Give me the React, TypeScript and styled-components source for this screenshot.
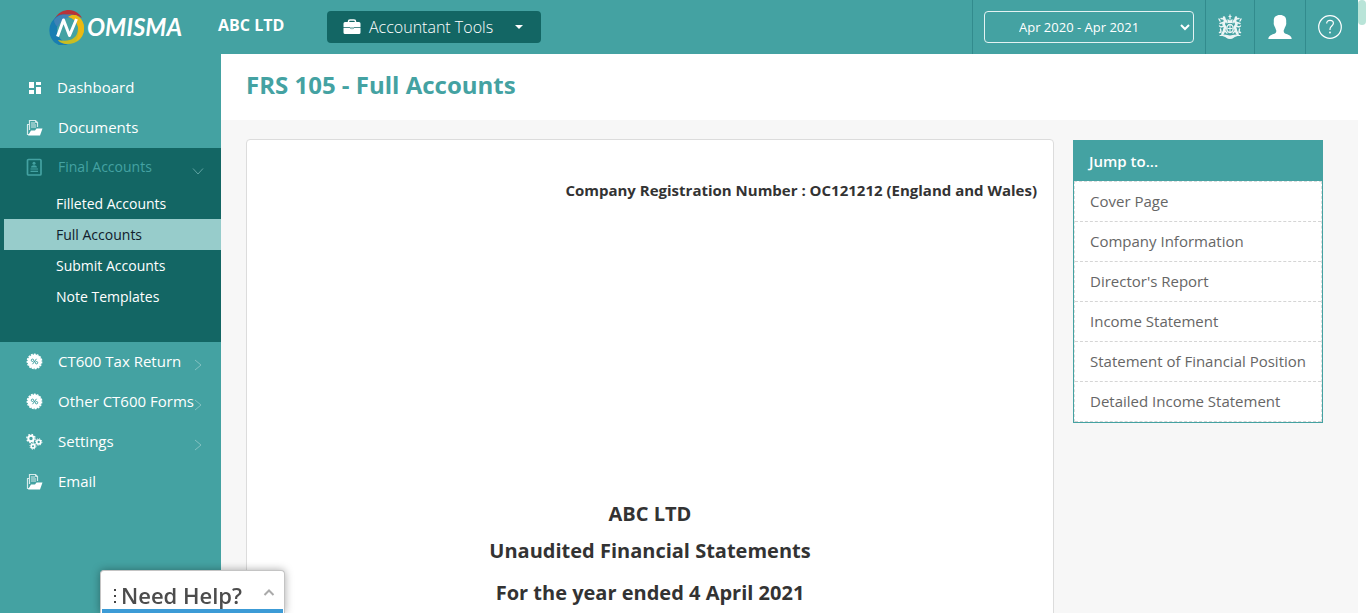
import React from "react";
import styled, { createGlobalStyle, css } from "styled-components";

const teal = "#44a2a2";
const deep = "#136664";

const GlobalStyle = createGlobalStyle`
  *, *::before, *::after { box-sizing: border-box; }
  body { margin: 0; font-family: "Open Sans", "Noto Sans", sans-serif; font-size: 15px; color: #333; background: #fff; }
  button, select { font-family: inherit; }
  a { text-decoration: none; color: inherit; }
  ul { list-style: none; margin: 0; padding: 0; }
  h1, h2, p { margin: 0; }
`;

const Page = styled.div`
  display: grid;
  grid-template-columns: minmax(0, 1fr) 8px;
  height: 100vh;
  overflow: hidden;
`;

const Shell = styled.div`
  display: flex;
  flex-direction: column;
  min-height: 0;
`;

const ScrollRail = styled.div`
  background: #fff;
`;

const ScrollThumb = styled.div`
  height: 25px;
  border-radius: 4px;
  background: #b9e4d8;
`;

const Header = styled.header`
  display: flex;
  align-items: center;
  flex: none;
  height: 54px;
  background: ${teal};
  color: #fff;
`;

const LogoLink = styled.a`
  display: block;
  width: 140px;
  height: 36px;
  margin-left: 49px;
`;

const Company = styled.strong`
  width: 109px;
  margin-left: 29px;
  padding-bottom: 4px;
  font-size: 16px;
  line-height: 22px;
  font-weight: 700;
`;

const ToolsButton = styled.button`
  display: flex;
  align-items: center;
  width: 214px;
  height: 32px;
  padding: 0 16px;
  border: 0;
  border-radius: 4px;
  background: ${deep};
  color: #fff;
  font-size: 16px;
  line-height: 22px;
  font-weight: 300;
  white-space: nowrap;
  span { margin: 0 22px 0 8px; }
`;

const HeaderCells = styled.div`
  display: flex;
  align-self: stretch;
  margin-left: auto;
`;

const Cell = styled.div<{ $width: number }>`
  display: flex;
  align-items: center;
  justify-content: center;
  width: ${(p) => p.$width}px;
  border-left: 1px solid #328b8d;
  &:last-child { padding-right: 4px; }
`;

const IconButton = styled.button`
  display: flex;
  padding: 0;
  border: 0;
  background: transparent;
  color: #fff;
`;

const PeriodSelect = styled.select`
  width: 210px;
  height: 32px;
  padding: 0 0 0 30px;
  border: 1px solid #e4f2f2;
  border-radius: 4px;
  background: ${teal};
  color: #fff;
  font-size: 13px;
`;

const Body = styled.div`
  display: flex;
  flex: 1;
  min-height: 0;
`;

const Sidebar = styled.nav`
  flex: none;
  width: 221px;
  padding-top: 14px;
  background: ${teal};
  color: #fff;
`;

const NavGroup = styled.li<{ $open?: boolean }>`
  ${(p) =>
    p.$open &&
    css`
      padding-bottom: 30px;
      background: ${deep};
    `}
`;

const NavLink = styled.a<{ $muted?: boolean }>`
  display: flex;
  align-items: center;
  height: 40px;
  padding: 0 19px 2px 26px;
  font-size: ${(p) => (p.$muted ? 14 : 15)}px;
  line-height: 20px;
  white-space: nowrap;
  && { color: ${(p) => (p.$muted ? teal : "#fff")}; }
  > svg:first-child { flex: none; margin-right: 15px; }
`;

const ArrowBox = styled.span<{ $down?: boolean }>`
  display: flex;
  margin-left: auto;
  margin-right: ${(p) => (p.$down ? "-2px" : "0")};
  padding-top: 8px;
  color: #83c1c1;
`;

const SubLink = styled.a<{ $active?: boolean }>`
  display: block;
  height: 31px;
  margin-left: 4px;
  padding-left: 52px;
  font-size: 14px;
  line-height: 31px;
  && { color: ${(p) => (p.$active ? "#10202c" : "#fff")}; }
  background: ${(p) => (p.$active ? "#97cccb" : "transparent")};
`;

const Main = styled.main`
  display: flex;
  flex-direction: column;
  flex: 1;
  min-width: 0;
  background: #f7f7f7;
`;

const TitleBar = styled.div`
  flex: none;
  height: 66px;
  padding: 14px 25px;
  background: #fff;
`;

const Title = styled.h1`
  color: ${teal};
  font-size: 24px;
  line-height: 33px;
  font-weight: 700;
`;

const Content = styled.div`
  display: flex;
  align-items: flex-start;
  gap: 19px;
  padding: 19px 35px 0 25px;
`;

const Paper = styled.article`
  flex: 1;
  min-width: 0;
  min-height: 640px;
  padding: 40px 16px;
  border: 1px solid #dcdcdc;
  border-radius: 4px;
  background: #fff;
`;

const Registration = styled.p`
  font-size: 15px;
  line-height: 20px;
  font-weight: 700;
  text-align: right;
`;

const Cover = styled.div`
  padding-top: 300px;
  text-align: center;
`;

const CoverLine = styled.h2`
  margin-bottom: 14px;
  font-size: 20px;
  line-height: 28px;
  font-weight: 700;
  &:first-child { margin-bottom: 9px; }
`;

const Jump = styled.nav`
  flex: none;
  width: 250px;
  margin-top: 1px;
  border: 1px solid ${teal};
  background: #fff;
`;

const JumpTitle = styled.h2`
  height: 40px;
  padding-left: 15px;
  background: ${teal};
  color: #fff;
  font-size: 15px;
  line-height: 41px;
  font-weight: 600;
`;

const JumpList = styled.ul`
  border: 1px dashed #dcdcdc;
  border-bottom: 0;
`;

const JumpItem = styled.li`
  height: 40px;
  padding-left: 15px;
  border-bottom: 1px dashed #d5d5d5;
  color: #666;
  font-size: 15px;
  line-height: 38px;
  white-space: nowrap;
`;

const Help = styled.button`
  position: fixed;
  bottom: 0;
  left: 100px;
  display: flex;
  align-items: center;
  width: 185px;
  height: 43px;
  padding: 5px 9px 0 12px;
  border: 1px solid #c4c4c4;
  border-bottom: 0;
  border-radius: 4px 4px 0 0;
  background: linear-gradient(#3c9bd6, #3c9bd6) 1px 38px / 181px 4px no-repeat #fff;
  box-shadow: 0 0 8px rgba(0, 0, 0, 0.35);
  color: #4c4c4c;
  font-size: 22px;
  line-height: 30px;
  font-weight: 600;
  span { margin: 0 auto 0 4px; }
`;

const Logo = () => (
  <svg width="140" height="36" viewBox="0 0 140 36" role="img" aria-label="Nomisma">
    <path d="M5 11C9 3 15 1 20 1c6 0 11 4 13 8-8-5-17-5-28 2z" fill="#b83338" />
    <path d="M5 10A13 15 0 0 0 19 35c-7-3-11-8-11-14 0-8 6-13 12-14C14 4 8 6 5 10z" fill="#197db2" />
    <path d="M5 11c5-6 13-7 20-3-9 0-14 4-16 10-2-1-4-4-4-7z" fill="#3f83b6" />
    <path d="M27 6c12 5 12 29-9 29-4 0-8-2-9-4 10 2 20 0 20-12 0-6-4-10-9-11 3-2 5-2 7-2z" fill="#c9bd22" />
    <path d="M24 6c6 0 12 7 11 15-1 7-5 10-8 11 2-4 3-8 2-14-1-5-5-9-10-10 1-1 3-2 5-2z" fill="#edb913" />
    <path d="M8.500 27.500 14.500 11 20.500 26.500 27.500 10" fill="none" stroke="#fff" strokeWidth="3" strokeLinejoin="round" />
    <text x="38" y="27" fill="#fff" fontFamily="Lato, sans-serif" fontSize="24" fontStyle="italic" fontWeight="700">OMISMA</text>
  </svg>
);

const Briefcase = () => (
  <svg width="18" height="16" viewBox="0 0 18 16" aria-hidden="true">
    <path d="M5.500 4V2.500C5.500 1.500 6 1 7 1h4c1 0 1.500.5 1.500 1.500V4" fill="none" stroke="#fff" strokeWidth="1.500" />
    <path d="M2 3h14a1.500 1.500 0 0 1 1.500 1.500V8H.5V4.500A1.500 1.500 0 0 1 2 3zM.5 8.700H7v1h4v-1h6.500v4.800A1.500 1.500 0 0 1 16 15H2a1.500 1.500 0 0 1-1.500-1.500z" fill="#fff" />
    <path d="M7 8h4v1.200c0 1.300-4 1.300-4 0z" fill="#9dc3c1" />
  </svg>
);

const Caret = () => (
  <svg width="8" height="4" viewBox="0 0 8 4" aria-hidden="true">
    <path d="M0 0h8L4 4z" fill="#fff" />
  </svg>
);

const CrestHalf = () => (
  <g fill="none" stroke="#fff" strokeLinecap="round">
    <path d="M6 3.500 7 7 5.500 10 7 13 6 17 4.500 20" strokeWidth="2.600" />
    <path d="M5.500 5 3 4.500M5 8.500 2 9.500M6 12 3 13 1.500 12M6 16 9 19M2.500 15 3 18 1.500 18.500M4 21 8 22.500M2 7 1 5" strokeWidth="1.400" />
    <path d="M8 6 9 9M2 21.500h3" strokeWidth="1.200" />
  </g>
);

const Crest = () => (
  <svg width="24" height="26" viewBox="0 0 24 26" aria-hidden="true" opacity="0.900">
    <CrestHalf />
    <g transform="translate(24 0) scale(-1 1)">
      <CrestHalf />
    </g>
    <path d="M12 0.500v5M10.500 2.500h3" fill="none" stroke="#fff" strokeWidth="1.200" />
    <path d="M9.500 9V5L12 6.500 14.500 5v4z" fill="#fff" />
    <ellipse cx="12" cy="14.500" rx="3.200" ry="4" fill="none" stroke="#fff" strokeWidth="1.400" />
    <path d="M12 11v7M9.500 14.500h5" fill="none" stroke="#fff" strokeWidth="1" />
    <path d="M6 20.500c3 0 4 1 6 1s3-1 6-1c-1 2.500-3 4.500-6 4.500s-5-2-6-4.500z" fill="#fff" />
  </svg>
);

const Person = () => (
  <svg width="24" height="24" viewBox="0 0 24 24" aria-hidden="true">
    <path d="M12 0c4.500 0 6.500 2.500 6.200 6.500 0 2 .3 2-.2 3.500-.5 1.400-1 2-1.500 3.500-.3 1-.8 1.200-.8 2.500 0 2.500 2 2.700 4.500 3.700 2.300 1 3.300 2 3.500 4.300H.3c.2-2.300 1.200-3.300 3.500-4.300 2.500-1 4.500-1.200 4.500-3.700 0-1.300-.5-1.500-.8-2.500C7 12 6.500 11.400 6 10c-.5-1.500-.2-1.500-.2-3.500C5.500 2.500 7.500 0 12 0z" fill="#fff" />
  </svg>
);

const Question = () => (
  <svg width="26" height="26" viewBox="0 0 26 26" aria-hidden="true">
    <g fill="none" stroke="#fff" strokeWidth="1.200">
      <circle cx="13" cy="13" r="11.300" />
      <path d="M9.700 9.500C9.700 7.500 11 6.300 13 6.300s3.400 1.200 3.400 3c0 2.600-3.400 2.700-3.400 5.700v1" />
    </g>
    <circle cx="13" cy="18.500" r="0.900" fill="#fff" />
  </svg>
);

const Tiles = () => (
  <svg width="16" height="16" viewBox="0 0 16 16" aria-hidden="true">
    <path d="M3 3h5v6H3zM10 3h5v3h-5zM3 11h5v4H3zM10 8h5v7h-5z" fill="#fff" />
  </svg>
);

const FileFolder = () => (
  <svg width="17" height="17" viewBox="0 0 17 17" aria-hidden="true">
    <path d="M3.500 11V1.500h6l2 2V8M1.500 5.500v10h2M3.500 5.500H1" fill="none" stroke="#d5ebeb" strokeWidth="1.200" />
    <path d="M5 4h4M5 6h5M5 8h5M9.500 1.500v2h2" fill="none" stroke="#d5ebeb" />
    <path d="M2 16.500 5 11.500h4L10.500 9.500H16.500L14 16.500z" fill="#fff" />
  </svg>
);

const Report = () => (
  <svg width="17" height="20" viewBox="0 0 17 20" aria-hidden="true">
    <rect x="1.500" y="2.500" width="13.500" height="15.500" rx="1" fill="none" stroke={teal} strokeWidth="1.700" />
    <circle cx="8" cy="6.200" r="1.500" fill={teal} />
    <path d="M5 10.500c0-3 6-3 6 0zM4.500 11.500h7.500v1H4.500zM4.500 13.700h7.500v1.300H4.500z" fill={teal} />
  </svg>
);

const PercentBadge = () => (
  <svg width="17" height="17" viewBox="0 0 17 17" aria-hidden="true">
    <circle cx="8.500" cy="8.500" r="7" fill="#fff" />
    <circle cx="8.500" cy="8.500" r="7.200" fill="none" stroke="#fff" strokeWidth="1.400" strokeDasharray="2 1" />
    <g fill="none" stroke={teal} strokeWidth="1">
      <circle cx="6.500" cy="7.300" r="1.200" />
      <circle cx="10.500" cy="9.700" r="1.200" />
      <path d="M10.500 5.800 6.500 11.200" />
    </g>
  </svg>
);

const Gears = () => (
  <svg width="17" height="17" viewBox="0 0 17 17" aria-hidden="true">
    <g fill="none" stroke="#fff">
      <circle cx="5" cy="5.500" r="2.700" strokeWidth="2" />
      <circle cx="5" cy="5.500" r="4.200" strokeWidth="1.200" strokeDasharray="1.600 1.700" />
      <circle cx="12.700" cy="9" r="2" strokeWidth="1.700" />
      <circle cx="12.700" cy="9" r="3.200" strokeWidth="1" strokeDasharray="1.300 1.200" />
      <circle cx="7" cy="13.200" r="1.800" strokeWidth="1.600" />
      <circle cx="7" cy="13.200" r="3" strokeWidth="1" strokeDasharray="1.200 1.150" />
    </g>
  </svg>
);

const ArrowRight = () => (
  <svg width="8" height="12" viewBox="0 0 8 12" aria-hidden="true">
    <path d="M1 1 7 6 1 11" fill="none" stroke="currentColor" />
  </svg>
);

const ArrowDown = () => (
  <svg width="12" height="12" viewBox="0 0 12 12" aria-hidden="true">
    <path d="M1 3.500 6 9 11 3.500" fill="none" stroke="#5fa3a2" />
  </svg>
);

const Dots = () => (
  <svg width="4" height="20" viewBox="0 0 4 20" aria-hidden="true">
    <path d="M1 4h2v2H1zM1 10h2v2H1zM1 16h2v2H1z" fill="#444" />
  </svg>
);

const ChevronUp = () => (
  <svg width="12" height="14" viewBox="0 0 12 14" aria-hidden="true">
    <path d="M1.500 7 6 2.500 10.500 7" fill="none" stroke="#aaa" strokeWidth="2" />
  </svg>
);

type Item = { label: string; icon: React.ReactNode; arrow?: boolean; children?: string[] };

const items: Item[] = [
  { label: "Dashboard", icon: <Tiles /> },
  { label: "Documents", icon: <FileFolder /> },
  {
    label: "Final Accounts",
    icon: <Report />,
    arrow: true,
    children: ["Filleted Accounts", "Full Accounts", "Submit Accounts", "Note Templates"],
  },
  { label: "CT600 Tax Return", icon: <PercentBadge />, arrow: true },
  { label: "Other CT600 Forms", icon: <PercentBadge />, arrow: true },
  { label: "Settings", icon: <Gears />, arrow: true },
  { label: "Email", icon: <FileFolder /> },
];

const sections = [
  "Cover Page",
  "Company Information",
  "Director's Report",
  "Income Statement",
  "Statement of Financial Position",
  "Detailed Income Statement",
];

export default function App() {
  return (
    <>
      <GlobalStyle />
      <Page>
        <Shell>
          <Header>
            <LogoLink href="#"><Logo /></LogoLink>
            <Company>ABC LTD</Company>
            <ToolsButton type="button">
              <Briefcase />
              <span>Accountant Tools</span>
              <Caret />
            </ToolsButton>
            <HeaderCells>
              <Cell $width={233}>
                <PeriodSelect aria-label="Accounting period">
                  <option>Apr 2020 - Apr 2021</option>
                </PeriodSelect>
              </Cell>
              <Cell $width={49}><IconButton type="button" aria-label="Government gateway"><Crest /></IconButton></Cell>
              <Cell $width={51}><IconButton type="button" aria-label="Profile"><Person /></IconButton></Cell>
              <Cell $width={53}><IconButton type="button" aria-label="Help"><Question /></IconButton></Cell>
            </HeaderCells>
          </Header>
          <Body>
            <Sidebar aria-label="Main">
              <ul>
                {items.map((item) => (
                  <NavGroup key={item.label} $open={!!item.children}>
                    <NavLink href="#" $muted={!!item.children}>
                      {item.icon}
                      {item.label}
                      {item.arrow && (
                        <ArrowBox $down={!!item.children}>
                          {item.children ? <ArrowDown /> : <ArrowRight />}
                        </ArrowBox>
                      )}
                    </NavLink>
                    {item.children && (
                      <ul>
                        {item.children.map((child) => (
                          <li key={child}><SubLink href="#" $active={child === "Full Accounts"}>{child}</SubLink></li>
                        ))}
                      </ul>
                    )}
                  </NavGroup>
                ))}
              </ul>
            </Sidebar>
            <Main>
              <TitleBar><Title>FRS 105 - Full Accounts</Title></TitleBar>
              <Content>
                <Paper>
                  <Registration>Company Registration Number : OC121212 (England and Wales)</Registration>
                  <Cover>
                    <CoverLine>ABC LTD</CoverLine>
                    <CoverLine>Unaudited Financial Statements</CoverLine>
                    <CoverLine>For the year ended 4 April 2021</CoverLine>
                  </Cover>
                </Paper>
                <Jump aria-label="Jump to">
                  <JumpTitle>Jump to...</JumpTitle>
                  <JumpList>
                    {sections.map((s) => (
                      <JumpItem key={s}><a href="#">{s}</a></JumpItem>
                    ))}
                  </JumpList>
                </Jump>
              </Content>
            </Main>
          </Body>
        </Shell>
        <ScrollRail><ScrollThumb /></ScrollRail>
      </Page>
      <Help type="button">
        <Dots />
        <span>Need Help?</span>
        <ChevronUp />
      </Help>
    </>
  );
}
